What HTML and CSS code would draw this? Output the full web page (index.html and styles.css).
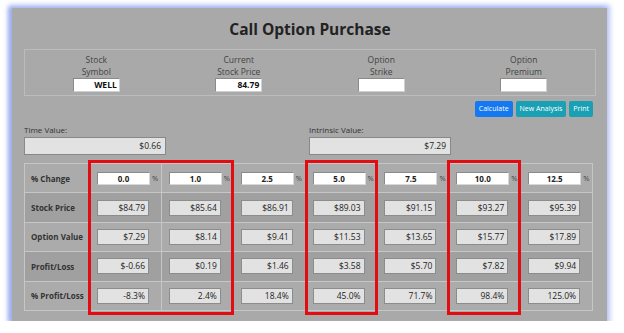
FILE: index.html
```html
<!DOCTYPE html>
<html>
<head>
<meta charset="utf-8">
<link rel="stylesheet" href="styles.css">
</head>
<body>
<div class="panel">
  <h1 class="title">Call Option Purchase</h1>
  <div class="group">
    <div class="field"><div class="lbl">Stock<br>Symbol</div><div class="inp">WELL</div></div>
    <div class="field"><div class="lbl">Current<br>Stock Price</div><div class="inp">84.79</div></div>
    <div class="field"><div class="lbl">Option<br>Strike</div><div class="inp"></div></div>
    <div class="field"><div class="lbl">Option<br>Premium</div><div class="inp"></div></div>
  </div>
  <div class="buttons">
    <span class="btn primary">Calculate</span>
    <span class="btn info">New Analysis</span>
    <span class="btn info">Print</span>
  </div>
  <div class="values">
    <div class="val"><div class="vlbl">Time Value:</div><div class="vbox">$0.66</div></div>
    <div class="val"><div class="vlbl">Intrinsic Value:</div><div class="vbox">$7.29</div></div>
  </div>
  <div class="tablewrap">
    <div class="grid">
      <div class="row odd">
        <div class="head">% Change</div>
        <div class="cell"><span class="pin">0.0</span><span class="pct">%</span></div>
        <div class="cell"><span class="pin">1.0</span><span class="pct">%</span></div>
        <div class="cell"><span class="pin">2.5</span><span class="pct">%</span></div>
        <div class="cell"><span class="pin">5.0</span><span class="pct">%</span></div>
        <div class="cell"><span class="pin">7.5</span><span class="pct">%</span></div>
        <div class="cell"><span class="pin">10.0</span><span class="pct">%</span></div>
        <div class="cell"><span class="pin">12.5</span><span class="pct">%</span></div>
      </div>
      <div class="row even">
        <div class="head">Stock Price</div>
        <div class="cell"><span class="box">$84.79</span></div>
        <div class="cell"><span class="box">$85.64</span></div>
        <div class="cell"><span class="box">$86.91</span></div>
        <div class="cell"><span class="box">$89.03</span></div>
        <div class="cell"><span class="box">$91.15</span></div>
        <div class="cell"><span class="box">$93.27</span></div>
        <div class="cell"><span class="box">$95.39</span></div>
      </div>
      <div class="row odd">
        <div class="head">Option Value</div>
        <div class="cell"><span class="box">$7.29</span></div>
        <div class="cell"><span class="box">$8.14</span></div>
        <div class="cell"><span class="box">$9.41</span></div>
        <div class="cell"><span class="box">$11.53</span></div>
        <div class="cell"><span class="box">$13.65</span></div>
        <div class="cell"><span class="box">$15.77</span></div>
        <div class="cell"><span class="box">$17.89</span></div>
      </div>
      <div class="row even">
        <div class="head">Profit/Loss</div>
        <div class="cell"><span class="box">$-0.66</span></div>
        <div class="cell"><span class="box">$0.19</span></div>
        <div class="cell"><span class="box">$1.46</span></div>
        <div class="cell"><span class="box">$3.58</span></div>
        <div class="cell"><span class="box">$5.70</span></div>
        <div class="cell"><span class="box">$7.82</span></div>
        <div class="cell"><span class="box">$9.94</span></div>
      </div>
      <div class="row odd">
        <div class="head">% Profit/Loss</div>
        <div class="cell"><span class="box">-8.3%</span></div>
        <div class="cell"><span class="box">2.4%</span></div>
        <div class="cell"><span class="box">18.4%</span></div>
        <div class="cell"><span class="box">45.0%</span></div>
        <div class="cell"><span class="box">71.7%</span></div>
        <div class="cell"><span class="box">98.4%</span></div>
        <div class="cell"><span class="box">125.0%</span></div>
      </div>
    </div>
    <div class="mark mark1"></div>
    <div class="mark mark2"></div>
    <div class="mark mark3"></div>
  </div>
</div>
</body>
</html>
```

FILE: styles.css
```css
html, body {
  margin: 0;
  padding: 0;
  background: #ffffff;
}
body {
  font-family: "Open Sans", "Noto Sans", "DejaVu Sans", sans-serif;
  color: #333;
}
.panel {
  box-sizing: border-box;
  margin: 8px 0 0 12px;
  width: 595px;
  height: 313px;
  background: #a9a9a9;
  padding: 11px 11px 0 12px;
  box-shadow: 0 0 5px 3px rgba(140, 160, 235, 0.6), -3px 0 4px 1px rgba(120, 140, 230, 0.55);
}
.title {
  margin: 0;
  font-size: 15.5px;
  line-height: 20px;
  font-weight: 700;
  text-align: center;
  color: #222;
}
.group {
  margin-top: 10px;
  border: 1px solid #bcbcbc;
  display: grid;
  grid-template-columns: repeat(4, 1fr);
  padding: 4px 0 3px;
  width: 572px;
  box-sizing: border-box;
}
.field {
  display: flex;
  flex-direction: column;
  align-items: center;
}
.lbl {
  font-size: 8.5px;
  line-height: 12px;
  color: #444;
  text-align: center;
}
.inp {
  box-sizing: border-box;
  width: 47px;
  height: 14px;
  background: #fff;
  border: 1px solid #8a8a8a;
  border-right-color: #d0d0d0;
  border-bottom-color: #d0d0d0;
  font-size: 8.5px;
  font-weight: 700;
  line-height: 12px;
  text-align: right;
  padding-right: 2px;
  color: #111;
}
.buttons {
  display: flex;
  justify-content: flex-end;
  gap: 3px;
  margin-top: 5px;
  width: 569px;
}
.btn {
  height: 16px;
  line-height: 16px;
  font-size: 7px;
  color: #fff;
  padding: 0 4px;
  border-radius: 2px;
}
.primary { background: #1478f0; }
.info { background: #1aa0b4; }
.values {
  display: grid;
  grid-template-columns: 285px 285px;
  margin-top: 7px;
}
.vlbl {
  font-size: 8px;
  line-height: 11px;
  color: #333;
}
.vbox {
  box-sizing: border-box;
  margin-top: 2px;
  width: 142px;
  height: 18px;
  background: #e2e2e2;
  border: 1px solid #888;
  font-size: 8.5px;
  line-height: 16px;
  text-align: right;
  padding-right: 4px;
  color: #222;
}
.tablewrap {
  position: relative;
  margin-top: 8px;
  width: 569px;
}
.grid {
  border: 1px solid #c6c6c6;
  display: flex;
  flex-direction: column;
}
.row {
  display: grid;
  grid-template-columns: 64px repeat(7, 1fr);
  height: 28.4px;
}
.row + .row { border-top: 1px solid #c6c6c6; }
.odd { background: #ababab; }
.even { background: #a0a0a0; }
.head {
  font-size: 8px;
  font-weight: 700;
  color: #333;
  padding-left: 6px;
  display: flex;
  align-items: center;
}
.cell {
  border-left: 1px solid #c6c6c6;
  display: flex;
  align-items: center;
  padding-left: 7px;
}
.pin {
  box-sizing: border-box;
  width: 53px;
  height: 13px;
  background: #fff;
  border: 1px solid #8a8a8a;
  border-right-color: #d8d8d8;
  border-bottom-color: #d8d8d8;
  font-size: 8px;
  font-weight: 700;
  line-height: 11px;
  text-align: center;
  color: #222;
}
.pct {
  font-size: 7.5px;
  color: #444;
  margin-left: 2px;
}
.box {
  box-sizing: border-box;
  width: 52px;
  height: 16px;
  background: #e2e2e2;
  border: 1px solid #8c8c8c;
  font-size: 8.5px;
  line-height: 14px;
  text-align: right;
  padding-right: 3px;
  color: #222;
}
.mark {
  position: absolute;
  top: -3px;
  height: 155px;
  border: 3px solid #e30c12;
  box-sizing: border-box;
}
.mark1 { left: 64px; width: 146px; }
.mark2 { left: 281px; width: 73px; }
.mark3 { left: 423px; width: 74px; }
```
